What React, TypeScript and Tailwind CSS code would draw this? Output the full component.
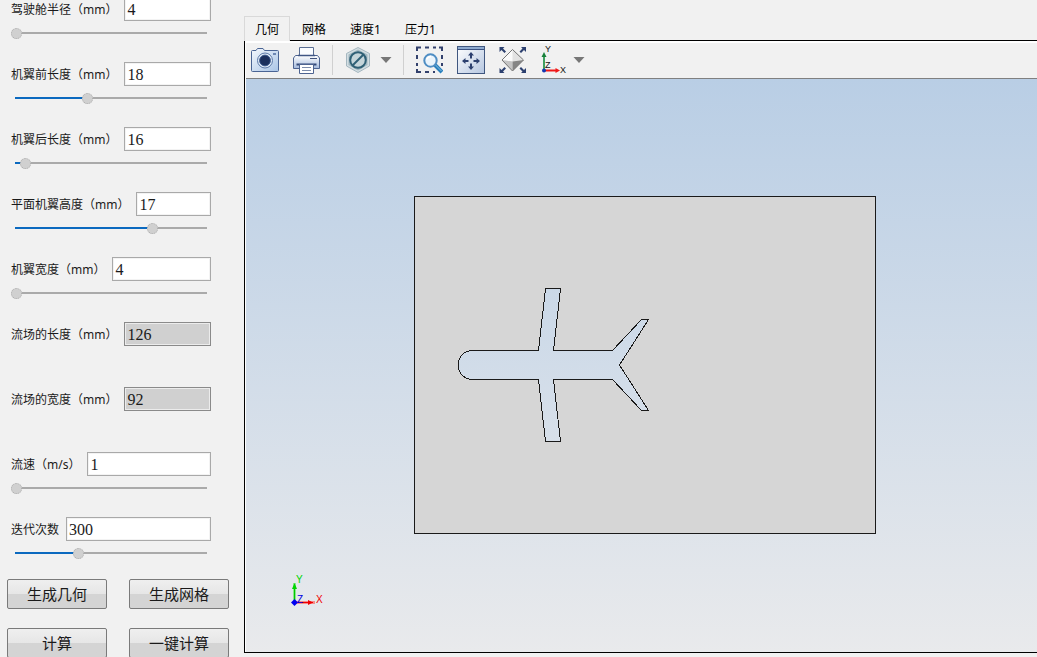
import { useState } from "react";
import type { ReactNode } from "react";

type Param = {
  id: string;
  label: string;
  value: string;
  // slider position, 0 - 1000
  pos?: number;
  readOnly?: boolean;
};

const params: Param[] = [
  { id: "cockpit", label: "驾驶舱半径（mm）", value: "4", pos: 0 },
  { id: "wingFront", label: "机翼前长度（mm）", value: "18", pos: 375 },
  { id: "wingBack", label: "机翼后长度（mm）", value: "16", pos: 48 },
  { id: "wingHeight", label: "平面机翼高度（mm）", value: "17", pos: 720 },
  { id: "wingWidth", label: "机翼宽度（mm）", value: "4", pos: 0 },
  { id: "fieldLength", label: "流场的长度（mm）", value: "126", readOnly: true },
  { id: "fieldWidth", label: "流场的宽度（mm）", value: "92", readOnly: true },
  { id: "speed", label: "流速（m/s）", value: "1", pos: 0 },
  { id: "iterations", label: "迭代次数", value: "300", pos: 328 },
];

const actions = ["生成几何", "生成网格", "计算", "一键计算"];
const tabs = ["几何", "网格", "速度1", "压力1"];

function Slider({ label, start }: { label: string; start: number }) {
  const [pos, setPos] = useState(start);
  const pct = pos / 10;
  return (
    <input
      type="range"
      aria-label={label}
      min={0}
      max={1000}
      value={pos}
      onChange={(e) => setPos(Number(e.target.value))}
      className="mt-1.5 block h-3 w-full appearance-none bg-[length:calc(100%-8px)_2px] bg-center bg-no-repeat outline-none [&::-webkit-slider-thumb]:size-[11px] [&::-webkit-slider-thumb]:appearance-none [&::-webkit-slider-thumb]:rounded-full [&::-webkit-slider-thumb]:border [&::-webkit-slider-thumb]:border-dotted [&::-webkit-slider-thumb]:border-[#adadad] [&::-webkit-slider-thumb]:bg-[#d0d0d0]"
      style={{
        backgroundImage: `linear-gradient(to right, #0b69bf ${pct}%, #aaaaaa ${pct}%)`,
      }}
    />
  );
}

function ParamRow({ param }: { param: Param }) {
  return (
    <div className="h-[65px]">
      <div className="flex items-center gap-[7px]">
        <label htmlFor={param.id} className="shrink-0 pt-0.5 text-xs">
          {param.label}
        </label>
        <input
          id={param.id}
          type="text"
          defaultValue={param.value}
          readOnly={param.readOnly}
          className={
            "h-6 min-w-0 flex-1 border px-0.5 pt-0.5 font-['Liberation_Serif',serif] text-base leading-5 outline-none " +
            (param.readOnly
              ? "border-[#8a8a8a] bg-[#d0d0d0] shadow-[inset_0_0_0_1px_#ececec]"
              : "border-[#a9a9a9] bg-white shadow-[inset_0_0_0_1px_#f3f3f3]")
          }
        />
      </div>
      {param.pos !== undefined && <Slider label={param.label} start={param.pos} />}
    </div>
  );
}

function CameraIcon() {
  return (
    <svg viewBox="0 0 28 28" className="size-7">
      <defs>
        <linearGradient id="cam" x1="0" y1="0" x2="1" y2="1">
          <stop offset="0" stopColor="#f4f8fd" />
          <stop offset="1" stopColor="#a9c4e6" />
        </linearGradient>
      </defs>
      <path d="M1.5 4.5H5L6.5 2.5H12L13.5 4.5H26.5Q27.5 4.5 27.5 5.5V24.5Q27.5 25.5 26.5 25.5H1.5Q.5 25.5 .5 24.5V5.5Q.5 4.5 1.5 4.5Z" fill="url(#cam)" stroke="#4a6494" />
      <circle cx="14" cy="14.5" r="7.5" fill="#dfe9f6" stroke="#5c79a8" />
      <circle cx="14" cy="14.5" r="5.4" fill="#1b2f5c" stroke="#3c5a8e" />
      <rect x="22" y="7" width="3" height="2" fill="#6c86b2" />
    </svg>
  );
}

function PrinterIcon() {
  return (
    <svg viewBox="0 0 28 28" className="size-7">
      <defs>
        <linearGradient id="prn" x1="0" y1="0" x2="0" y2="1">
          <stop offset="0" stopColor="#ffffff" />
          <stop offset="1" stopColor="#a3b9dc" />
        </linearGradient>
      </defs>
      <path d="M6.5 10V1.5H20.5V10" fill="#fafcff" stroke="#5b6f94" />
      <path d="M2.5 9.5H24.5L26.5 12V22.5H.5V12Z" fill="url(#prn)" stroke="#4d6390" />
      <path d="M5 9.5H22" stroke="#3f5584" strokeWidth="1.5" />
      <path d="M17 12.5H24" stroke="#41537c" />
      <path d="M3.5 18.5H23.5" stroke="#344a7a" strokeWidth="2" />
      <path d="M6.5 18.5H20.5V27.5H6.5Z" fill="#fff" stroke="#4d6390" />
      <path d="M9 21.5H18M9 24.5H18" stroke="#7c8cab" />
    </svg>
  );
}

function HexIcon() {
  return (
    <svg viewBox="0 0 28 28" className="size-7">
      <path d="M14 1.5L25.5 7.5V20L14 26.5L2.5 20V7.5Z" fill="#d3dee2" stroke="#a5b7c0" />
      <path d="M14 3.5L23.5 8.5V19L14 24.5L4.5 19V8.5Z" fill="#a3b8c1" />
      <circle cx="14" cy="14" r="7.8" fill="#c5d5da" stroke="#2f6076" strokeWidth="2" />
      <path d="M8.5 19.5L19.5 8.5" stroke="#2f6076" strokeWidth="2" />
    </svg>
  );
}

function ZoomBoxIcon() {
  return (
    <svg viewBox="0 0 28 28" className="size-7" fill="none">
      <path d="M2 5V1.5H6M10 1.5H14M18 1.5H21M24 1.5H27V5M27 9V13M27 17V20M2 9V13M2 17V20M2 23V26H6M10 26H14M18 26H20" stroke="#33416d" strokeWidth="2" />
      <path d="M20 19L27 26" stroke="#2a80bd" strokeWidth="4" />
      <path d="M20 18.5L26.5 25" stroke="#83bfe5" />
      <circle cx="15.5" cy="14.5" r="6.2" fill="#eaf4fc" stroke="#4e8dc3" strokeWidth="2" />
      <path d="M11.5 13.5Q13 10.5 16 10.5" stroke="#fff" strokeWidth="1.5" />
    </svg>
  );
}

function FitIcon() {
  return (
    <svg viewBox="0 0 28 28" className="size-7">
      <defs>
        <linearGradient id="fit" x1="0" y1="0" x2="1" y2="1">
          <stop offset="0" stopColor="#ffffff" />
          <stop offset="1" stopColor="#b5c6e0" />
        </linearGradient>
      </defs>
      <rect x=".5" y=".5" width="27" height="27" fill="url(#fit)" stroke="#40577f" />
      <rect x="1" y="1" width="26" height="2" fill="#8fabd0" />
      <path d="M1 3.5H27" stroke="#3b5282" />
      <path d="M14 6L17 9.5H15V12.5H13V9.5H11ZM14 24L17 20.5H15V17.5H13V20.5H11ZM5 15L8.5 12V14H11.5V16H8.5V18ZM23 15L19.5 12V14H16.5V16H19.5V18Z" fill="#2c406f" />
    </svg>
  );
}

function DiamondIcon() {
  return (
    <svg viewBox="0 0 28 28" className="size-7">
      <path d="M13.5 3.5L24.5 14L13.5 15.5L3 14Z" fill="#e2e2e2" />
      <path d="M13.5 3.5V15.5L3 14Z" fill="#fafafa" />
      <path d="M3 14L13.5 15.5V25Z" fill="#c4c4c4" />
      <path d="M24.5 14L13.5 15.5V25Z" fill="#858585" />
      <path d="M13.5 3.5L24.5 14L13.5 25L3 14Z" fill="none" stroke="#747474" />
      <path d="M.5 1H5.5L4 2.5L7 5.5L5.5 7L2.5 4L.5 6ZM27 1H22L23.5 2.5L20.5 5.5L22 7L25 4L27 6ZM.5 27H5.5L4 25.5L7 22.5L5.5 21L2.5 24L.5 22ZM27 27H22L23.5 25.5L20.5 22.5L22 21L25 24L27 22Z" fill="#2c406f" />
    </svg>
  );
}

function AxesIcon() {
  return (
    <svg viewBox="0 0 28 28" className="size-7 overflow-visible font-['Liberation_Sans',sans-serif] text-[9px]">
      <path d="M3 24V9" stroke="#3fa061" strokeWidth="2" />
      <path d="M3 6L5.5 11H.5Z" fill="#17803a" />
      <path d="M4 24.5H15" stroke="#f01818" strokeWidth="2" />
      <path d="M19 24.5L14.5 22V27Z" fill="#f01818" />
      <circle cx="3" cy="24.5" r="2" fill="#1237b0" />
      <text x="4" y="6" fill="#111">Y</text>
      <text x="4" y="22" fill="#111">Z</text>
      <text x="19" y="27" fill="#111">X</text>
    </svg>
  );
}

function ToolButton({ label, children }: { label: string; children: ReactNode }) {
  return (
    <button type="button" aria-label={label} className="shrink-0">
      {children}
    </button>
  );
}

function DropArrow() {
  return (
    <button type="button" aria-label="更多" className="shrink-0">
      <svg viewBox="0 0 12 6" className="h-1.5 w-3">
        <path d="M.5 0H11.5L6 6Z" fill="#777" />
      </svg>
    </button>
  );
}

function Divider() {
  return <span className="mx-[11px] h-[30px] w-px shrink-0 bg-[#d0d0d0]" />;
}

function Toolbar() {
  return (
    <div className="flex h-[38px] shrink-0 items-center border-t-2 border-b border-t-white border-b-[#808080] bg-[#f1f1f1] px-[5px] pb-0.5">
      <div className="flex items-center gap-3.5">
        <ToolButton label="截图"><CameraIcon /></ToolButton>
        <ToolButton label="打印"><PrinterIcon /></ToolButton>
      </div>
      <Divider />
      <div className="flex items-center gap-2">
        <ToolButton label="隐藏"><HexIcon /></ToolButton>
        <DropArrow />
      </div>
      <Divider />
      <div className="flex items-center gap-3.5">
        <ToolButton label="框选缩放"><ZoomBoxIcon /></ToolButton>
        <ToolButton label="适应窗口"><FitIcon /></ToolButton>
        <ToolButton label="缩放"><DiamondIcon /></ToolButton>
        <div className="flex items-center gap-1">
          <ToolButton label="视图方向"><AxesIcon /></ToolButton>
          <DropArrow />
        </div>
      </div>
    </div>
  );
}

function Geometry() {
  return (
    <svg viewBox="0 0 462 338" className="w-[462px] shrink-0" shapeRendering="crispEdges">
      {/* flow field with the aircraft cut out of it */}
      <path
        fillRule="evenodd"
        fill="#d6d6d6"
        stroke="#1a1a1a"
        d="M.5 .5H461.5V337.5H.5Z M131.5 92.5H146.5L139.5 154.5H198.5L227.5 123.5H234.5L205.5 169L234.5 214.5H227.5L198.5 183.5H139.5L146.5 245.5H131.5L124.5 183.5H58.5A14.5 14.5 0 0 1 58.5 154.5H124.5Z"
      />
    </svg>
  );
}

function Triad() {
  return (
    <svg viewBox="0 0 36 36" className="absolute bottom-10 left-11 size-9 overflow-visible font-['Liberation_Sans',sans-serif] text-[10px]">
      <path d="M4.5 26V7" stroke="#8be58b" strokeWidth="3" />
      <path d="M4.5 26V8" stroke="#00c800" />
      <path d="M4.5 7L7 13H2Z" fill="#00d400" />
      <path d="M5 26.5H25" stroke="#f58a8a" strokeWidth="3" />
      <path d="M5 26.5H23" stroke="#f00000" />
      <path d="M23 26.5L18 24V29Z" fill="#f00000" />
      <path d="M4.5 23L8 26.5L4.5 30L1 26.5Z" fill="#0000f0" />
      <text x="6" y="7" fill="#00d400">Y</text>
      <text x="7" y="27" fill="#0000e0">Z</text>
      <text x="26" y="27" fill="#f00000">X</text>
    </svg>
  );
}

export default function App() {
  const [tab, setTab] = useState(0);

  return (
    <div className="flex h-screen overflow-hidden bg-[#f1f1f1] font-['Noto_Sans','Noto_Sans_CJK_SC',sans-serif] text-[#1a1a1a]">
      <aside className="w-[244px] shrink-0 overflow-hidden">
        <div className="-mt-[3px] w-[211px] pl-[11px]">
          {params.map((param) => (
            <ParamRow key={param.id} param={param} />
          ))}
        </div>
        <div className="-mt-[3px] grid grid-cols-2 gap-x-[22px] gap-y-[19px] pr-[15px] pl-[7px]">
          {actions.map((name) => (
            <button
              key={name}
              type="button"
              className="h-[30px] rounded-xs border border-[#7a7a7a] bg-linear-to-b from-[#efefef] from-0% via-[#e6e6e6] via-50% to-[#d4d4d4] to-50% text-[15px] leading-5"
            >
              {name}
            </button>
          ))}
        </div>
      </aside>

      <main className="flex min-w-0 flex-1 flex-col pt-4 pb-1">
        <div role="tablist" className="flex h-6 shrink-0 text-xs text-black">
          {tabs.map((name, i) => (
            <button
              key={name}
              type="button"
              role="tab"
              aria-selected={i === tab}
              onClick={() => setTab(i)}
              className={
                i === tab
                  ? "relative -mb-px border border-b-0 border-[#d9d9d9] bg-[#f1f1f1] px-2.5 pt-0.5"
                  : "px-3 pt-1"
              }
            >
              {name}
            </button>
          ))}
        </div>
        <section className="flex min-h-0 flex-1 flex-col border-y border-l border-black bg-white pl-px">
          <Toolbar />
          <div className="relative flex min-h-0 flex-1 items-center justify-center overflow-hidden bg-linear-to-b from-[#b9cee5] to-[#e9eaec] pb-0.5 pl-[7px]">
            <Geometry />
            <Triad />
          </div>
        </section>
      </main>
    </div>
  );
}
